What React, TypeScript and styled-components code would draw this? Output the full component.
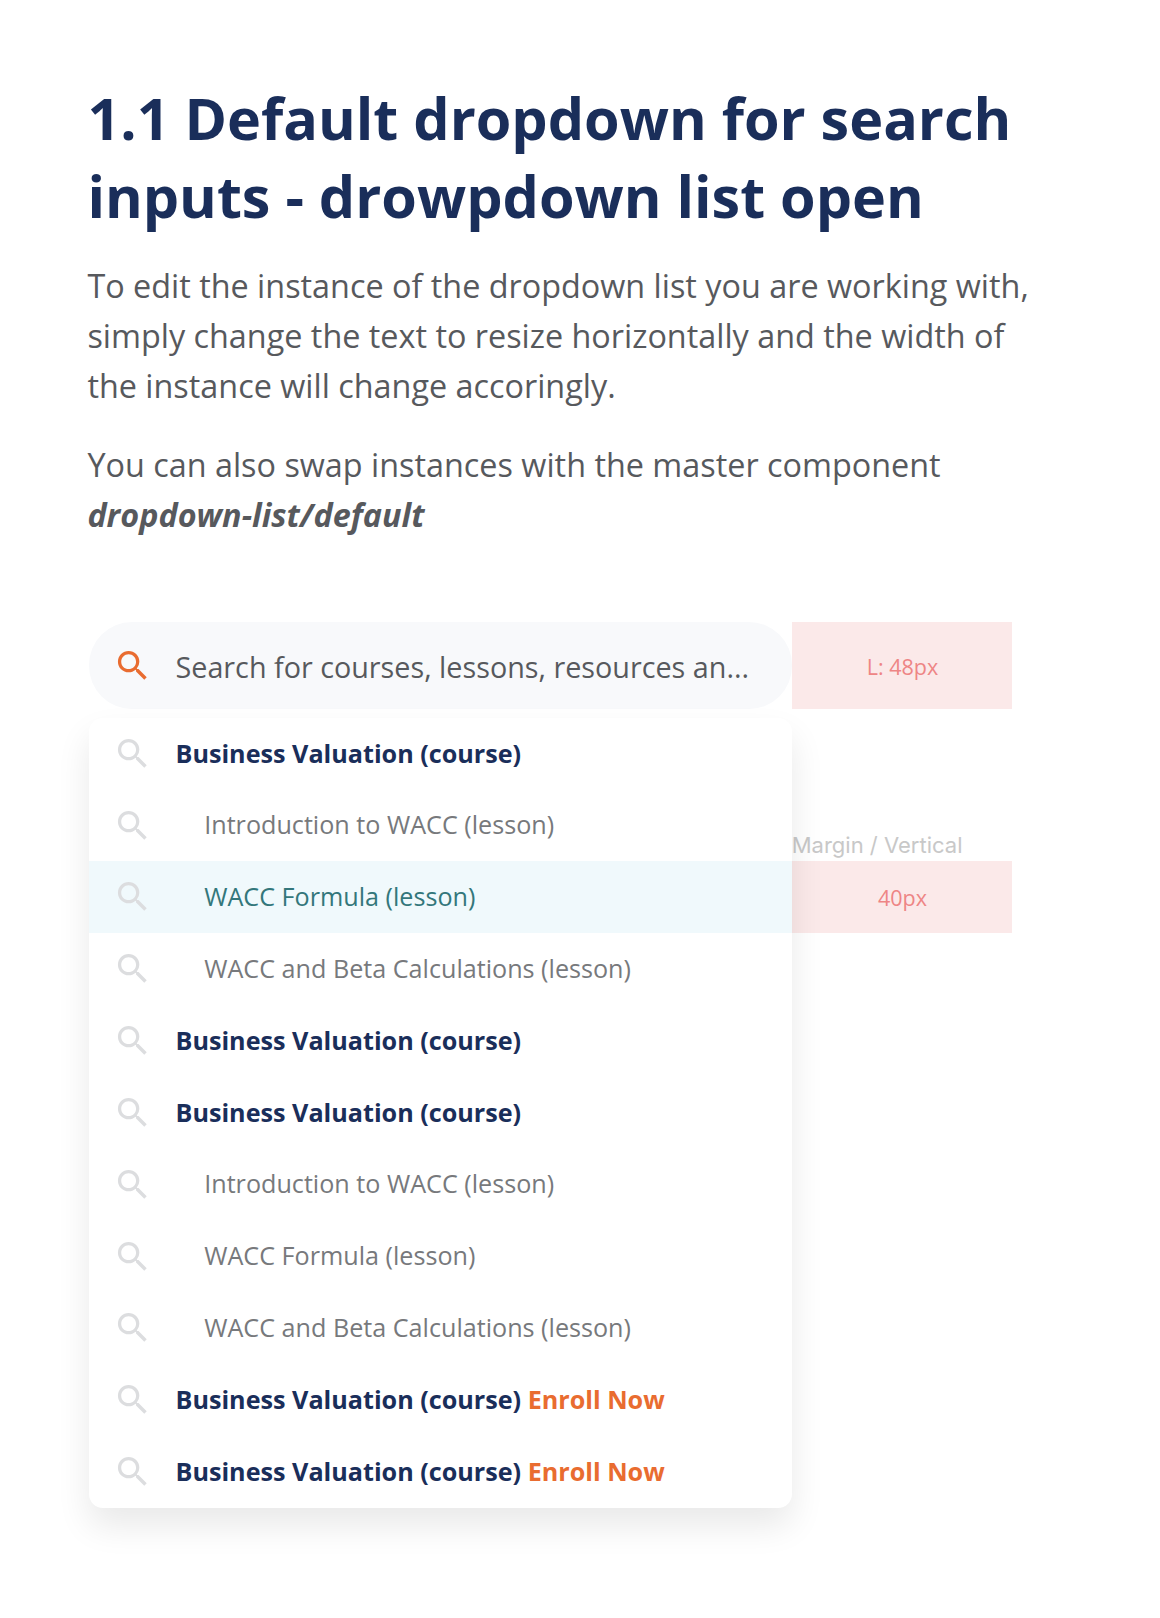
import React from 'react';
import styled, { createGlobalStyle } from 'styled-components';

const Global = createGlobalStyle`
  *{box-sizing:border-box}
  body{margin:0;background:#fff;font-family:"Open Sans",sans-serif}
`;
const Page = styled.main`width:1160px;height:1618px;padding:79px 0 0 87.4px;overflow:hidden;`;
const Title = styled.h1`margin:0;font-size:57.5px;line-height:78.4px;font-weight:700;color:#1a2e5a;white-space:nowrap;`;
const Copy = styled.p<{ $top: number }>`margin:${p => p.$top}px 0 0;font-size:32.36px;line-height:50.26px;color:#57595d;white-space:nowrap;`;
const Strong = styled.em`font-weight:700;`;
const Demo = styled.section`display:flex;align-items:flex-start;margin:82.7px 0 0 2px;`;
const Combo = styled.div`width:702.3px;position:relative;z-index:1;`;
const Search = styled.div`height:86.2px;border-radius:43.1px;background:#f8f9fb;display:flex;align-items:center;padding-left:23.8px;font-size:28.75px;color:#57595d;white-space:nowrap;`;
const Icon = styled.svg<{ $color: string }>`width:39.5px;height:39.5px;flex:none;fill:${p => p.$color};`;
const SearchText = styled.span`margin-left:22.8px;padding-top:1.4px;`;
const List = styled.ul`list-style:none;margin:9px 0 0;padding:0;border-radius:14px;background:#fff;box-shadow:0 18px 34px rgba(0,0,0,.09);`;
const Row = styled.li<{ $active?: boolean }>`height:71.84px;display:flex;align-items:center;padding-left:23.8px;background:${p => p.$active ? '#f0f9fc' : 'transparent'};`;
const Label = styled.span<{ $course: boolean; $active?: boolean }>`margin:0 0 2px ${p => p.$course ? 22.8 : 51.5}px;font-size:25.16px;line-height:34px;white-space:nowrap;font-weight:${p => p.$course ? 700 : 400};color:${p => p.$active ? '#33777b' : p.$course ? '#1a2e5a' : '#77797c'};`;
const Enroll = styled.span`color:#e96c30;`;
const Specs = styled.aside`width:220.7px;`;
const Spec = styled.div<{ $h: number }>`height:${p => p.$h}px;padding:1px 0 0 1px;background:#fbe9e9;color:#ee8585;font-size:21.54px;display:flex;align-items:center;justify-content:center;`;
const SpecTitle = styled.div`margin-top:120.6px;height:32px;font-family:Inter,sans-serif;font-size:22px;line-height:32px;color:#c8c8c8;white-space:nowrap;`;

const Glass = ({ color }: { color: string }) => (
  <Icon $color={color} viewBox="0 0 24 24"><path d="M15.5 14h-.79l-.28-.27A6.471 6.471 0 0 0 16 9.5 6.5 6.5 0 1 0 9.5 16c1.61 0 3.09-.59 4.23-1.57l.27.28v.79l5 4.99L20.49 19l-4.99-5zm-6 0C7.01 14 5 11.99 5 9.5S7.01 5 9.5 5 14 7.01 14 9.5 11.99 14 9.5 14z" /></Icon>
);
const course = 'Business Valuation (course)';
const rows: { text: string; course?: boolean; active?: boolean; enroll?: boolean }[] = [
  { text: course, course: true },
  { text: 'Introduction to WACC (lesson)' },
  { text: 'WACC Formula (lesson)', active: true },
  { text: 'WACC and Beta Calculations (lesson)' },
  { text: course, course: true },
  { text: course, course: true },
  { text: 'Introduction to WACC (lesson)' },
  { text: 'WACC Formula (lesson)' },
  { text: 'WACC and Beta Calculations (lesson)' },
  { text: course, course: true, enroll: true },
  { text: course, course: true, enroll: true },
];

export default function App() {
  return (
    <Page>
      <Global />
      <Title>1.1 Default dropdown for search<br />inputs - drowpdown list open</Title>
      <Copy $top={24}>To edit the instance of the dropdown list you are working with,<br />simply change the text to resize horizontally and the width of<br />the instance will change accoringly.</Copy>
      <Copy $top={28.6}>You can also swap instances with the master component<br /><Strong>dropdown-list/default</Strong></Copy>
      <Demo>
        <Combo>
          <Search><Glass color="#e96c30" /><SearchText>Search for courses, lessons, resources an...</SearchText></Search>
          <List>
            {rows.map((r, i) => (
              <Row key={i} $active={r.active}>
                <Glass color="#dcdddf" />
                <Label $course={!!r.course} $active={r.active}>{r.text}{r.enroll && <Enroll> Enroll Now</Enroll>}</Label>
              </Row>
            ))}
          </List>
        </Combo>
        <Specs>
          <Spec $h={86.2}>L: 48px</Spec>
          <SpecTitle>Margin / Vertical</SpecTitle>
          <Spec $h={71.8}>40px</Spec>
        </Specs>
      </Demo>
    </Page>
  );
}
